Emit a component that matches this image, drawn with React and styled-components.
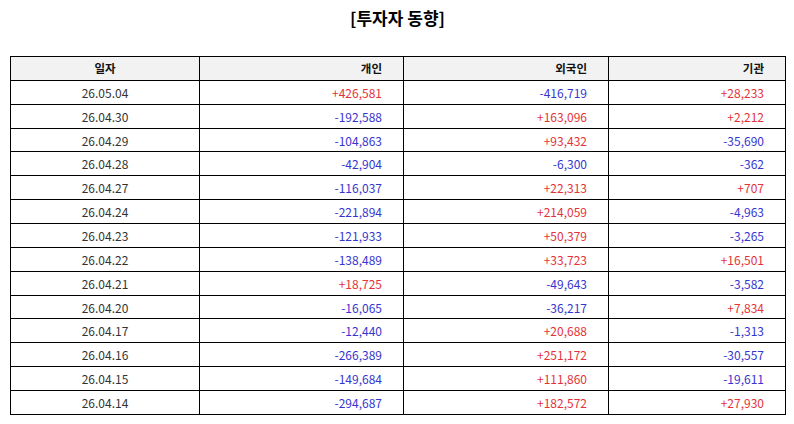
import React from "react";
import styled, { createGlobalStyle } from "styled-components";

const rows = [
  ["26.05.04", "+426,581", "-416,719", "+28,233"],
  ["26.04.30", "-192,588", "+163,096", "+2,212"],
  ["26.04.29", "-104,863", "+93,432", "-35,690"],
  ["26.04.28", "-42,904", "-6,300", "-362"],
  ["26.04.27", "-116,037", "+22,313", "+707"],
  ["26.04.24", "-221,894", "+214,059", "-4,963"],
  ["26.04.23", "-121,933", "+50,379", "-3,265"],
  ["26.04.22", "-138,489", "+33,723", "+16,501"],
  ["26.04.21", "+18,725", "-49,643", "-3,582"],
  ["26.04.20", "-16,065", "-36,217", "+7,834"],
  ["26.04.17", "-12,440", "+20,688", "-1,313"],
  ["26.04.16", "-266,389", "+251,172", "-30,557"],
  ["26.04.15", "-149,684", "+111,860", "-19,611"],
  ["26.04.14", "-294,687", "+182,572", "+27,930"],
];

const GlobalStyle = createGlobalStyle`
  body {
    margin: 0;
    background: #fff;
    font-family: "Noto Sans CJK KR", "Noto Sans", sans-serif;
  }
`;

const Page = styled.div`
  padding: 0 9px 0 10px;
`;

const Title = styled.h2`
  margin: 0;
  height: 56px;
  padding-top: 6px;
  box-sizing: border-box;
  text-align: center;
  font-size: 17px;
  font-weight: 700;
  color: #000;
  line-height: 24px;
`;

const Table = styled.table`
  width: 775px;
  border-collapse: collapse;
  table-layout: fixed;
  font-size: 12px;
`;

const Row = styled.tr`
  height: 23.87px;
`;

const Head = styled.th`
  background: #f2f2f2;
  border: 1px solid #000;
  font-weight: 700;
  font-size: 11.5px;
  color: #111;
  padding: 0 21px;
  text-align: ${(p) => (p.$center ? "center" : "right")};
`;

const Cell = styled.td`
  border: 1px solid #000;
  padding: 0 21px;
  color: ${(p) => (p.$sign === "+" ? "#e53238" : p.$sign === "-" ? "#3535d0" : "#333")};
  text-align: ${(p) => (p.$center ? "center" : "right")};
`;

export default function App() {
  return (
    <>
      <GlobalStyle />
      <Page>
        <Title>[투자자 동향]</Title>
        <Table>
          <colgroup>
            <col style={{ width: 189 }} />
            <col style={{ width: 204 }} />
            <col style={{ width: 205 }} />
            <col style={{ width: 177 }} />
          </colgroup>
          <thead>
            <Row>
              <Head $center>일자</Head>
              <Head>개인</Head>
              <Head>외국인</Head>
              <Head>기관</Head>
            </Row>
          </thead>
          <tbody>
            {rows.map(([date, ...vals]) => (
              <Row key={date}>
                <Cell $center>{date}</Cell>
                {vals.map((v, i) => (
                  <Cell key={i} $sign={v[0]}>
                    {v}
                  </Cell>
                ))}
              </Row>
            ))}
          </tbody>
        </Table>
      </Page>
    </>
  );
}
